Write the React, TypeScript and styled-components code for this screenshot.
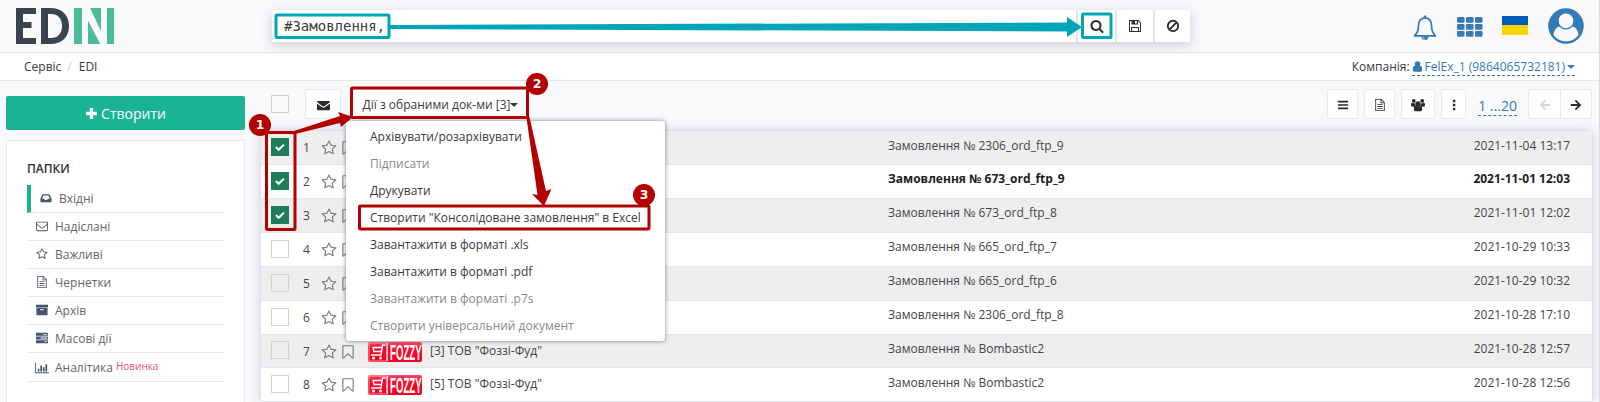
import React from "react";
import styled, { createGlobalStyle, css } from "styled-components";

const Global = createGlobalStyle`
  * { box-sizing: border-box; }
  html, body { margin: 0; padding: 0; }
  body {
    width: 1600px; height: 402px; overflow: hidden;
    background: #f9f9fc; color: #3a3a3c;
    font-family: "Open Sans", "Noto Sans", sans-serif; font-size: 12px;
  }
`;

const Page = styled.div`
  position: relative;
  width: 1600px;
  height: 402px;
  overflow: hidden;
  border-right: 1px solid #dcdde1;
`;

const Header = styled.header`
  display: flex;
  height: 53px;
  border-bottom: 1px solid #e2e5ea;
`;
const LogoBox = styled.div`
  width: 272px;
  padding: 8px 0 0 16px;
`;
const SearchBar = styled.div`
  display: flex;
  gap: 2px;
  width: 918px;
  height: 32px;
  margin-top: 10px;
  background: #e4e5e8;
  box-shadow: 0 3px 12px rgba(70, 80, 120, 0.26);
`;
const SearchInput = styled.div`
  flex: 1;
  padding: 0 12px;
  background: #fff;
  font: 14px/32px "DejaVu Sans Mono", monospace;
  white-space: pre;
`;
const SearchButton = styled.div<{ $w?: number }>`
  display: flex;
  align-items: center;
  justify-content: center;
  width: ${(p) => p.$w ?? 36}px;
  background: #fff;
  color: #2f2f33;
`;
const HeaderIcons = styled.div`
  display: flex;
  margin-left: auto;
  padding-right: 15px;
  color: #337ab7;
`;
const HeaderIcon = styled.div<{ $top: number; $right?: number }>`
  padding-top: ${(p) => p.$top}px;
  margin-right: ${(p) => p.$right ?? 0}px;
`;
const Flag = styled.div`
  width: 26px;
  height: 19px;
  background: linear-gradient(#005bbb 50%, #ffd500 50%);
`;

const Crumbs = styled.nav`
  display: flex;
  align-items: center;
  justify-content: space-between;
  height: 28px;
  padding: 0 24px;
  background: #fff;
  border-bottom: 1px solid #e2e5ea;
`;
const CrumbList = styled.div`
  display: flex;
  i { font-style: normal; color: #ccc; margin: 0 7px 0 6px; }
`;
const CompanyLine = styled.div`
  display: flex;
  align-items: flex-start;
  gap: 2px;
  padding-top: 1px;
`;
const CompanyLink = styled.span`
  display: flex;
  align-items: center;
  gap: 2px;
  height: 18px;
  color: #337ab7;
  border-bottom: 1px dashed #337ab7;
`;
const Caret = styled.span`
  border: 4px solid transparent;
  border-top-color: currentColor;
  border-bottom: 0;
`;

const Main = styled.main`
  display: flex;
  height: 321px;
`;
const Side = styled.aside`
  width: 261px;
  padding: 15px 16px 0 6px;
`;
const CreateButton = styled.div`
  display: flex;
  align-items: center;
  justify-content: center;
  gap: 3px;
  height: 34px;
  margin-bottom: 10px;
  border-radius: 2px;
  background: #1ab394;
  color: #fff;
  font-size: 14px;
`;
const FolderCard = styled.div`
  height: 290px;
  padding: 20px 20px 0;
  border: 1px solid #e7eaf3;
  background: #fff;
`;
const FolderTitle = styled.div`
  height: 24px;
  line-height: 15px;
  font-size: 12px;
  font-weight: 600;
  color: #2f2f33;
`;
const Folder = styled.div<{ $active?: boolean; $tall?: boolean }>`
  display: flex;
  align-items: center;
  height: ${(p) => (p.$tall ? 29 : 28)}px;
  padding: ${(p) => (p.$tall ? "1px 0 0 9px" : "0 0 1px 9px")};
  border-bottom: 1px solid #e7eaec;
  color: #666;
  ${(p) => p.$active && css`border-left: 4px solid #1ab394;`}
  svg { width: 12px; margin-right: 7px; color: #46566b; overflow: visible; }
`;
const NewTag = styled.span`
  margin: -4px 0 0 3px;
  color: #ed5565;
  font-size: 10px;
`;

const Content = styled.section`
  width: 1331px;
`;
const Toolbar = styled.div`
  display: flex;
  align-items: flex-start;
  height: 50px;
  padding: 8px 0 0 10px;
`;
const ToolButton = styled.div<{ $w: number; $gap?: number; $muted?: boolean }>`
  display: flex;
  align-items: center;
  justify-content: center;
  width: ${(p) => p.$w}px;
  height: 30px;
  padding-top: 2px;
  margin-right: ${(p) => p.$gap ?? 6}px;
  border: 1px solid #e7eaec;
  border-radius: 2px;
  background: #fff;
  color: ${(p) => (p.$muted ? "#d5d5d5" : "#2b2b2d")};
`;
const ActionsButton = styled(ToolButton)`
  padding: 1px 0 0 3px;
  white-space: nowrap;
  color: #3a3a3c;
`;
const Pages = styled.span`
  height: 27px;
  margin: 0 11px 0 6px;
  line-height: 33px;
  font-size: 14px;
  color: #337ab7;
  border-bottom: 1px dashed #337ab7;
`;
const Spacer = styled.div`
  flex: 1;
`;
const Check = styled.span<{ $on?: boolean; $head?: boolean }>`
  display: flex;
  align-items: center;
  justify-content: center;
  width: 18px;
  height: 18px;
  margin-bottom: 2px;
  border: 1px solid ${(p) => (p.$on ? "#1c7d58" : "#d6d3cb")};
  background: ${(p) => (p.$on ? "#1c7d58" : "transparent")};
  ${(p) => p.$head && css`margin: 6px 16px 0 0;`}
`;

const Table = styled.div`
  background: #fff;
  box-shadow: 0 0 10px rgba(70, 80, 120, 0.28);
`;
const Row = styled.div<{ $odd: boolean; $short: boolean }>`
  display: grid;
  grid-template-columns: 30px 20px 19px 28px 62px 458px 1fr auto;
  align-items: center;
  height: ${(p) => (p.$short ? 33 : 34)}px;
  padding: 0 22px 0 10px;
  border-bottom: 1px solid #e4e7ea;
  background: ${(p) => (p.$odd ? "#eeeeee" : "#fff")};
  color: #454547;
  > svg { color: #777c83; margin-top: 1px; }
`;
const Num = styled.span`
  padding: 0 0 0 2px;
`;
const Cell = styled.span<{ $bold?: boolean; $lift: number }>`
  padding-bottom: ${(p) => p.$lift}px;
  white-space: pre;
  ${(p) => p.$bold && css`font-weight: 700; color: #1d1d1f;`}
`;

const Menu = styled.div`
  position: absolute;
  left: 346px;
  top: 121px;
  width: 319px;
  height: 220px;
  padding: 3px 24px;
  border-radius: 3px;
  background: #fff;
  box-shadow: 0 0 4px rgba(70, 75, 115, 0.7);
`;
const MenuItem = styled.div<{ $off?: boolean }>`
  height: 27px;
  line-height: 26px;
  white-space: nowrap;
  color: ${(p) => (p.$off ? "#8a8a8a" : "#3a3a3c")};
`;

const Callouts = styled.svg`
  position: absolute;
  left: 0;
  top: 0;
`;
const Badge = styled.span<{ $x: number; $y: number }>`
  position: absolute;
  left: ${(p) => p.$x - 11}px;
  top: ${(p) => p.$y - 11}px;
  width: 22px;
  height: 22px;
  border-radius: 50%;
  background: #b30000;
  color: #fff;
  text-align: center;
  font: bold 12.5px/22px "DejaVu Sans", sans-serif;
`;

/* Icons on a 1792-unit grid */
const glyphs = {
  star: "M1201 1004l306-297-422-62-189-382-189 382-422 62 306 297-73 421 378-199 377 199zm527-357q0 22-26 48l-363 354 86 500q1 7 1 20 0 50-41 50-19 0-40-12l-449-236-449 236q-22 12-40 12-21 0-31.500-14.500t-10.500-35.500q0-6 2-20l86-500-364-354q-25-27-25-48 0-37 56-46l502-73 225-455q19-41 49-41t49 41l225 455 502 73q56 9 56 46z",
  search: "M1216 832q0-185-131.500-316.500t-316.500-131.500-316.500 131.500-131.500 316.500 131.500 316.500 316.500 131.500 316.500-131.500 131.500-316.500zm512 832q0 52-38 90t-90 38q-54 0-90-38l-343-342q-179 124-399 124-143 0-273.500-55.500t-225-150-150-225-55.500-273.500 55.500-273.500 150-225 225-150 273.500-55.500 273.500 55.500 225 150 150 225 55.500 273.500q0 220-124 399l343 343q37 37 37 90z",
  bookmark: "M1408 256h-1024v1242l423-406 89-85 89 85 423 406v-1242zm12-128q23 0 44 9 33 13 52.500 41t19.500 62v1289q0 34-19.500 62t-52.500 41q-19 8-44 8-48 0-83-32l-441-424-441 424q-36 33-83 33-23 0-44-9-33-13-52.500-41t-19.500-62v-1289q0-34 19.500-62t52.500-41q21-9 44-9h1048z",
  envelope: "M1664 1504v-768q-32 36-69 66-268 206-426 338-51 43-83 67t-86.500 48.500-102.500 24.500h-2q-48 0-102.500-24.500t-86.500-48.500-83-67q-158-132-426-338-37-30-69-66v768q0 13 9.500 22.500t22.500 9.500h1472q13 0 22.500-9.500t9.500-22.500zm0-1051v-24.500l-.5-13-3-12.500-5.500-9-9-7.500-14-2.500h-1472q-13 0-22.500 9.500t-9.500 22.500q0 168 147 284 193 152 401 317 6 5 35 29.500t46 37.500 44.500 31.500 50.500 27.500 43 9h2q20 0 43-9t50.500-27.500 44.500-31.500 46-37.500 35-29.500q208-165 401-317 54-43 100.500-115.500t46.500-131.500zm128-37v1088q0 66-47 113t-113 47h-1472q-66 0-113-47t-47-113v-1088q0-66 47-113t113-47h1472q66 0 113 47t47 113z",
};
const Glyph = ({ name, size }: { name: keyof typeof glyphs; size: number }) => (
  <svg width={size} height={size} viewBox="0 0 1792 1792" fill="currentColor"><path d={glyphs[name]} /></svg>
);

/* Icons on a 14-unit grid */
const art: Record<string, React.ReactNode> = {
  inbox: <path fillRule="evenodd" d="M3.5 2.5h7q.6 0 .9.6L13.500 8v3.200q0 .8-.8.8H1.300q-.8 0-.8-.8V8l2.100-4.900q.3-.6.9-.6zM4 4 2.400 7.800h2.400l.8 1.500h2.800l.8-1.500h2.400L10 4z" />,
  file: <path fillRule="evenodd" d="M1.500 0h7.200L12.500 3.800V13.300q0 .7-.7.7H2.200q-.7 0-.7-.7zM2.500 1v12h9V5H7.700V1zM8.700 1.200V4h2.700zM4 6h6v1H4zM4 8.200h6v1H4zM4 10.400h6v1H4z" />,
  archive: <path fillRule="evenodd" d="M0 1h14v3H0zM.5 4.600h13V13H.5zM5 6v1.200h4V6z" />,
  tasks: <path fillRule="evenodd" d="M0 1h14v3.400H0zM0 5.300h14v3.400H0zM0 9.600h14V13H0zM8.500 2.200v1h4.500v-1zM5.500 6.500v1H13v-1zM10 10.800v1h3v-1z" />,
  chart: <path d="M-1 1H0v11h15v1H-1zM2 8h2v3H2zM5 4h2v7H5zM8 6h2v5H8zM11 2.500h2V11h-2z" />,
  plus: <path d="M5.200 1.200h3.600v4h4v3.600h-4v4H5.200v-4h-4V5.200h4z" />,
  save: <path fillRule="evenodd" d="M1 1h9.500L13 3.500V13H1zM2 2v10h1V8h8v4h1V4l-2-2v3.600H3.500V2zM7 2v2.600h1.800V2zM4 9v3h6V9z" />,
  ban: <g fill="none" stroke="currentColor" strokeWidth="1.900"><circle cx="7" cy="7" r="5.200" /><path d="M3.400 10.600 10.600 3.400" /></g>,
  mail: <path d="M0 3.200q0-1 1-1h12q1 0 1 1L8 7.700q-1 .7-2 0zM0 4.900l5.500 3.900q1.500 1 3 0L14 4.900V11q0 1-1 1H1q-1 0-1-1z" />,
  bars: <path d="M1 2h12v2H1zM1 6h12v2H1zM1 10h12v2H1z" />,
  users: <path d="M7 3.300a2.600 2.600 0 1 1 0 5.200 2.600 2.600 0 0 1 0-5.200zM2.800 1a1.900 1.900 0 1 1 0 3.800 1.900 1.900 0 0 1 0-3.800zM11.200 1a1.900 1.900 0 1 1 0 3.800 1.900 1.900 0 0 1 0-3.800zM0 7q0-2.300 1-2.300 1.700 1 2.900.5 0 2 1 2.900L3.500 8.700H1Q0 8.700 0 7zM14 7q0-2.300-1-2.300-1.700 1-2.900.5 0 2-1 2.900l1.400.6H13q1 0 1-1.700zM2.800 11.300q0-3.300 1.900-3.300 2.300 1.500 4.600 0 1.900 0 1.900 3.300 0 1.900-1.500 1.900H4.300q-1.500 0-1.500-1.900z" />,
  dots: <path d="M5.700 1h2.800v2.800H5.700zM5.700 5.600h2.800v2.800H5.700zM5.700 10.200h2.800V13H5.700z" />,
  left: <path d="M7 .8 8.400 2.200 5 5.700h8v2.600H5l3.400 3.500L7 13.200.8 7z" />,
  right: <path d="M7 .8 5.600 2.200 9 5.700H1v2.600h8l-3.400 3.500L7 13.200 13.200 7z" />,
  user: <path d="M7 .3a3.600 3.600 0 1 1 0 7.200A3.600 3.600 0 0 1 7 .3zM1 11q0-4.900 2.900-4.900 3.100 2.600 6.200 0 2.900 0 2.900 4.900 0 2.700-2.100 2.700H3.100Q1 13.700 1 11z" />,
  check: <path d="m2.200 7 3.200 3.200 6.200-6" fill="none" stroke="currentColor" strokeWidth="2.300" />,
};
const Art = ({ name, size = 12 }: { name: string; size?: number }) => (
  <svg width={size} height={size} viewBox="0 0 14 14" fill="currentColor">{art[name]}</svg>
);

const Logo = () => (
  <svg width="98" height="36" viewBox="0 0 98 36">
    <g fill="#3a4350">
      <path d="M0 0h20v6H7v8h8.500v6H7v10h13v6H0z" />
      <path fillRule="evenodd" d="M25 0h9c12 0 19 7 19 18s-7 18-19 18h-9zM32 6v24h3c7 0 11-4.500 11-12S42 6 35 6z" />
    </g>
    <path fill="#48bd97" d="M58 0h8v36h-8zM72 12.500 84.300 36H72zM74 0h11v23zM91 0h7v36h-7z" />
  </svg>
);

const Bell = () => (
  <svg width="24" height="26" viewBox="0 0 24 26" fill="none" stroke="currentColor" strokeWidth="1.700">
    <path d="M12 2.800C7 3.200 5.500 7 5.500 10.500c0 5.500-1.500 8-4 10.300h21c-2.500-2.300-4-4.800-4-10.300C18.500 7 17 3.200 12 2.800z" strokeLinejoin="round" />
    <path d="M12 .5v3" strokeWidth="2.600" />
    <path d="M8.500 21.500h7a3.500 3.500 0 0 1-7 0z" fill="currentColor" stroke="none" />
    <path d="M12 24.300q-1.800 0-2-2" stroke="#f9f9fc" strokeWidth=".7" />
  </svg>
);
const Grid = () => (
  <svg width="26" height="20" viewBox="0 0 26 20" fill="currentColor">
    {[0, 7, 14].map((y) => [0, 9, 18].map((x) => <rect key={`${x}-${y}`} x={x} y={y} width="7.500" height="5.700" rx="1.300" />))}
  </svg>
);
const Avatar = () => (
  <svg width="36" height="36" viewBox="0 0 36 36">
    <circle cx="18" cy="18" r="17.800" fill="#337ab7" />
    <path d="M5.500 27C6 21.500 9 18.500 12 18.500q6 4.500 12 0c3 0 6 3 6.500 8.500A15.500 15.500 0 0 1 5.500 27z" fill="#f9f9fc" />
    <circle cx="18" cy="12.800" r="8" fill="#f9f9fc" stroke="#337ab7" strokeWidth="1.200" />
  </svg>
);

const BrandMark = styled.span`
  display: flex;
  width: 54px;
  height: 20px;
  margin-top: 1px;
  border-radius: 2px;
  background: linear-gradient(#ff5068, #fa0a2c 30%, #f30022);
  svg { overflow: visible; }
`;
const Fozzy = () => (
  <BrandMark>
    <svg width="54" height="20" viewBox="0 0 54 20">
      <rect x="1" y="1" width="17.500" height="18" stroke="#ffb3bf" strokeWidth=".8" fill="none" />
      <path d="M17.500 3h-3l-1.500 10H3M4.500 5.500H14M5 5.500l1 4h7.500" fill="none" stroke="#fff" strokeWidth="1.400" />
      <circle cx="5.500" cy="16" r="1.500" fill="#fff" />
      <circle cx="12.500" cy="16" r="1.500" fill="#fff" />
      <path d="M19.500 1v18" stroke="#fff" strokeWidth=".8" />
      <text transform="translate(22 17.800) scale(.44 1)" fill="#fff" fontFamily="Liberation Sans" fontWeight="700" fontSize="22">FOZZY</text>
    </svg>
  </BrandMark>
);

const folders = [
  ["inbox", "Вхідні"], ["envelope", "Надіслані"], ["star", "Важливі"], ["file", "Чернетки"],
  ["archive", "Архів"], ["tasks", "Масові дії"], ["chart", "Аналітика"],
];
const rows = [
  ["2306_ord_ftp_9", "2021-11-04 13:17", ""],
  ["673_ord_ftp_9", "2021-11-01 12:03", ""],
  ["673_ord_ftp_8", "2021-11-01 12:02", ""],
  ["665_ord_ftp_7", "2021-10-29 10:33", ""],
  ["665_ord_ftp_6", "2021-10-29 10:32", ""],
  ["2306_ord_ftp_8", "2021-10-28 17:10", ""],
  ["Bombastic2", "2021-10-28 12:57", '[3] ТОВ "Фоззі-Фуд"'],
  ["Bombastic2", "2021-10-28 12:56", '[5] ТОВ "Фоззі-Фуд"'],
];
const menu: [string, boolean][] = [
  ["Архівувати/розархівувати", false],
  ["Підписати", true],
  ["Друкувати", false],
  ['Створити "Консолідоване замовлення" в Excel', false],
  ["Завантажити в форматі .xls", false],
  ["Завантажити в форматі .pdf", false],
  ["Завантажити в форматі .p7s", true],
  ["Створити універсальний документ", true],
];

export default function App() {
  return (
    <Page>
      <Global />
      <Header>
        <LogoBox><Logo /></LogoBox>
        <SearchBar>
          <SearchInput>#Замовлення,</SearchInput>
          <SearchButton $w={37}><Glyph name="search" size={14} /></SearchButton>
          <SearchButton $w={36}><Art name="save" size={14} /></SearchButton>
          <SearchButton $w={35}><Art name="ban" size={14} /></SearchButton>
        </SearchBar>
        <HeaderIcons>
          <HeaderIcon $top={15} $right={20}><Bell /></HeaderIcon>
          <HeaderIcon $top={17} $right={19}><Grid /></HeaderIcon>
          <HeaderIcon $top={16} $right={20}><Flag /></HeaderIcon>
          <HeaderIcon $top={8}><Avatar /></HeaderIcon>
        </HeaderIcons>
      </Header>
      <Crumbs>
        <CrumbList>Сервіс<i>/</i>EDI</CrumbList>
        <CompanyLine>
          <span>Компанія:</span>
          <CompanyLink><Art name="user" size={11} />FelEx_1 (9864065732181)<Caret /></CompanyLink>
        </CompanyLine>
      </Crumbs>
      <Main>
        <Side>
          <CreateButton><Art name="plus" size={13} />Створити</CreateButton>
          <FolderCard>
            <FolderTitle>ПАПКИ</FolderTitle>
            {folders.map(([icon, label], i) => (
              <Folder key={label} $active={i === 0} $tall={i === 6}>
                {icon in glyphs ? <Glyph name={icon as keyof typeof glyphs} size={12} /> : <Art name={icon} />}
                {label}
                {i === 6 && <NewTag>Новинка</NewTag>}
              </Folder>
            ))}
          </FolderCard>
        </Side>
        <Content>
          <Toolbar>
            <Check $head />
            <ToolButton $w={36} $gap={10}><Art name="mail" size={13} /></ToolButton>
            <ActionsButton $w={176}>Дії з обраними док-ми [3]<Caret /></ActionsButton>
            <Spacer />
            <ToolButton $w={31}><Art name="bars" size={12} /></ToolButton>
            <ToolButton $w={31}><Art name="file" size={12} /></ToolButton>
            <ToolButton $w={34}><Art name="users" size={14} /></ToolButton>
            <ToolButton $w={25}><Art name="dots" size={12} /></ToolButton>
            <Pages>1 ...20</Pages>
            <ToolButton $w={33} $gap={-1} $muted><Art name="left" size={12} /></ToolButton>
            <ToolButton $w={32} $gap={0}><Art name="right" size={12} /></ToolButton>
          </Toolbar>
          <Table>
            {rows.map(([order, date, company], i) => {
              const lift = i === 0 || i === 7 ? 4 : 6;
              return (
                <Row key={i} $odd={i % 2 === 0} $short={i === 6}>
                  <Check $on={i < 3}>{i < 3 && <svg width="12" height="12" viewBox="0 0 14 14" color="#fff">{art.check}</svg>}</Check>
                  <Num>{i + 1}</Num>
                  <Glyph name="star" size={16} />
                  <Glyph name="bookmark" size={16} />
                  {company ? <Fozzy /> : <span />}
                  <Cell $lift={i === 7 ? 3 : 1}>{company}</Cell>
                  <Cell $lift={lift} $bold={i === 1}>Замовлення № {order}</Cell>
                  <Cell $lift={lift} $bold={i === 1}>{date}</Cell>
                </Row>
              );
            })}
          </Table>
        </Content>
      </Main>
      <Menu>
        {menu.map(([label, off]) => <MenuItem key={label} $off={off}>{label}</MenuItem>)}
      </Menu>
      <Callouts width="1600" height="402" viewBox="0 0 1600 402" fill="none">
        <g stroke="#00a5b8" strokeWidth="3">
          <rect x="276" y="15" width="113" height="22.500" rx="1" />
          <rect x="1082.500" y="14" width="28.500" height="23.500" rx="1" />
        </g>
        <path d="M390 25 1067 22.500V17L1082 27 1067 37V31.500L390 29z" fill="#00a5b8" />
        <g stroke="#b30000" strokeWidth="3">
          <rect x="266.500" y="132.500" width="28.500" height="97" rx="1" />
          <rect x="351.500" y="88" width="176" height="29.500" rx="1" />
          <rect x="359.500" y="206" width="289.500" height="23" rx="1" />
        </g>
        <g fill="#b30000">
          <path d="M294 131 340 116 338 112 353 117 341 127 340 123 295 134z" />
          <path d="M526.500 118 537.500 195 532 194 544 206 551.500 189 546 191 529.500 117z" />
        </g>
      </Callouts>
      <Badge $x={260} $y={125}>1</Badge>
      <Badge $x={537} $y={84}>2</Badge>
      <Badge $x={644} $y={195}>3</Badge>
    </Page>
  );
}
